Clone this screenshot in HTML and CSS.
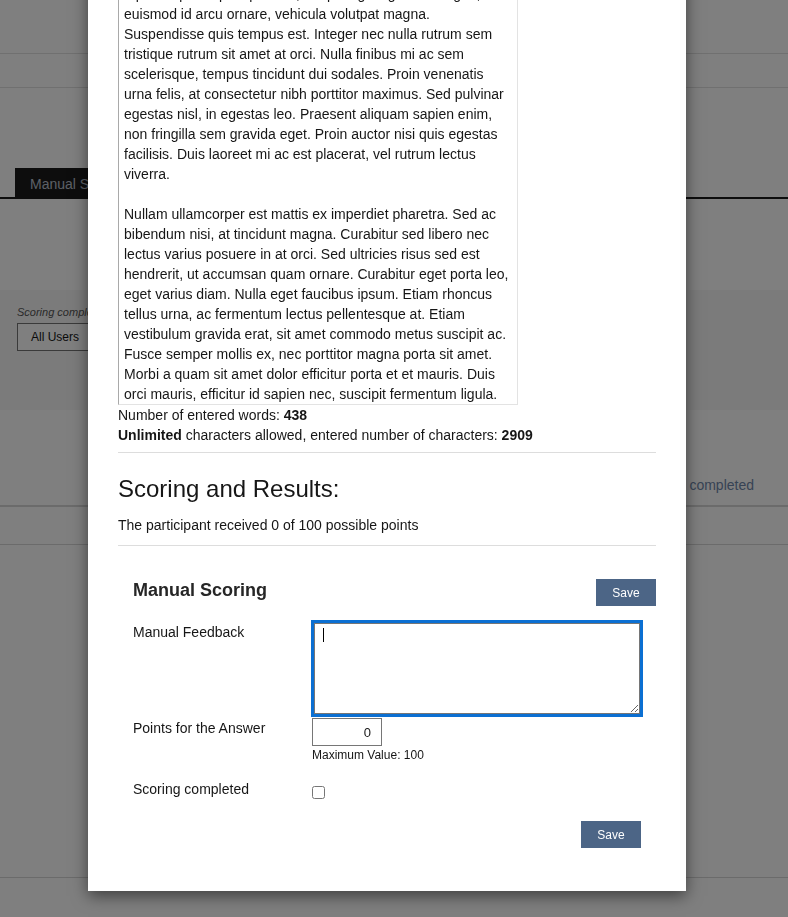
FILE: index.html
```html
<!DOCTYPE html>
<html lang="en">
<head>
<meta charset="utf-8">
<title>Manual Scoring</title>
<link rel="stylesheet" href="styles.css">
</head>
<body>
<div class="page">
  <div class="hdr"></div>
  <div class="subhdr"></div>
  <div class="tabs"><div class="tab">Manual Scoring</div></div>
  <div class="filter">
    <div class="filter-label">Scoring completed</div>
    <div class="filter-btn">All Users</div>
  </div>
  <div class="tbl-head"><span class="tbl-link">Scoring completed</span></div>
  <div class="tbl-row"></div>
  <div class="tbl-body"></div>
</div>

<div class="backdrop"></div>

<div class="modal">
  <div class="answer">
    <div class="ln">Vivamus lobortis felis vitae dictum tempus. Aenean dapibus</div>
    <div class="ln">sem in lorem pellentesque, in interdum nisl tincidunt. Cras</div>
    <div class="ln">a purus quis sapien pretium, tempor ligula gravida augue,</div>
    <div class="ln">euismod id arcu ornare, vehicula volutpat magna.</div>
    <div class="ln">Suspendisse quis tempus est. Integer nec nulla rutrum sem</div>
    <div class="ln">tristique rutrum sit amet at orci. Nulla finibus mi ac sem</div>
    <div class="ln">scelerisque, tempus tincidunt dui sodales. Proin venenatis</div>
    <div class="ln">urna felis, at consectetur nibh porttitor maximus. Sed pulvinar</div>
    <div class="ln">egestas nisl, in egestas leo. Praesent aliquam sapien enim,</div>
    <div class="ln">non fringilla sem gravida eget. Proin auctor nisi quis egestas</div>
    <div class="ln">facilisis. Duis laoreet mi ac est placerat, vel rutrum lectus</div>
    <div class="ln">viverra.</div>
    <div class="ln">&nbsp;</div>
    <div class="ln">Nullam ullamcorper est mattis ex imperdiet pharetra. Sed ac</div>
    <div class="ln">bibendum nisi, at tincidunt magna. Curabitur sed libero nec</div>
    <div class="ln">lectus varius posuere in at orci. Sed ultricies risus sed est</div>
    <div class="ln">hendrerit, ut accumsan quam ornare. Curabitur eget porta leo,</div>
    <div class="ln">eget varius diam. Nulla eget faucibus ipsum. Etiam rhoncus</div>
    <div class="ln">tellus urna, ac fermentum lectus pellentesque at. Etiam</div>
    <div class="ln">vestibulum gravida erat, sit amet commodo metus suscipit ac.</div>
    <div class="ln">Fusce semper mollis ex, nec porttitor magna porta sit amet.</div>
    <div class="ln">Morbi a quam sit amet dolor efficitur porta et et mauris. Duis</div>
    <div class="ln">orci mauris, efficitur id sapien nec, suscipit fermentum ligula.</div>
  </div>
  <div class="stat">Number of entered words: <b>438</b></div>
  <div class="stat"><b>Unlimited</b> characters allowed, entered number of characters: <b>2909</b></div>
  <hr class="sep sep-top">
  <h2 class="res-title">Scoring and Results:</h2>
  <p class="res-text">The participant received 0 of 100 possible points</p>
  <hr class="sep sep-bottom">

  <section class="scoring">
    <div class="scoring-head">
      <h3 class="scoring-title">Manual Scoring</h3>
      <button class="btn" type="button">Save</button>
    </div>
    <div class="form">
      <div class="row row-feedback">
        <label class="lbl" for="fb">Manual Feedback</label>
        <div class="ctl"><div class="fb-wrap"><textarea id="fb" class="feedback" autofocus></textarea></div></div>
      </div>
      <div class="row row-points">
        <label class="lbl" for="pts">Points for the Answer</label>
        <div class="ctl">
          <input id="pts" class="points" type="text" value="0">
          <div class="hint">Maximum Value: 100</div>
        </div>
      </div>
      <div class="row row-done">
        <label class="lbl" for="done">Scoring completed</label>
        <div class="ctl"><input id="done" class="check" type="checkbox"></div>
      </div>
    </div>
    <div class="actions"><button class="btn" type="button">Save</button></div>
  </section>
</div>
</body>
</html>
```

FILE: styles.css
```css
html, body {
  margin: 0;
  padding: 0;
}
body {
  font-family: "Liberation Sans", Arial, sans-serif;
  font-size: 14px;
  color: #161616;
  background: #fff;
  overflow: hidden;
  height: 917px;
}

/* background page */
.page {
  width: 788px;
}
.hdr {
  height: 53px;
  border-bottom: 1px solid #e0e0e0;
}
.subhdr {
  height: 33px;
  border-bottom: 1px solid #e0e0e0;
}
.tabs {
  padding-top: 80px;
  border-bottom: 2px solid #1a1a1a;
  display: flex;
}
.tab {
  margin-left: 15px;
  background: #1a1a1a;
  color: #b9c0cd;
  height: 29px;
  box-sizing: border-box;
  padding: 3px 15px 0;
  line-height: 26px;
  font-size: 14px;
}
.filter {
  margin-top: 91px;
  height: 120px;
  box-sizing: border-box;
  background: #f6f6f6;
  padding: 16px 0 0 17px;
}
.filter-label {
  font-style: italic;
  font-size: 11px;
  line-height: 12px;
  color: #555;
}
.filter-btn {
  margin-top: 5px;
  width: 120px;
  height: 28px;
  box-sizing: border-box;
  border: 1px solid #757575;
  background: #fff;
  font-size: 12px;
  line-height: 26px;
  padding-left: 13px;
  color: #161616;
}
.tbl-head {
  height: 97px;
  box-sizing: border-box;
  border-bottom: 2px solid #d6d6d6;
  display: flex;
  justify-content: flex-end;
  align-items: flex-end;
  padding: 0 34px 10px 0;
}
.tbl-link {
  color: #6f86aa;
  line-height: 20px;
  font-size: 14px;
}
.tbl-row {
  height: 37px;
  border-bottom: 1px solid #d6d6d6;
}
.tbl-body {
  height: 332px;
  border-bottom: 1px solid #d6d6d6;
}

/* overlay */
.backdrop {
  position: fixed;
  inset: 0;
  background: rgba(0, 0, 0, 0.5);
}

.modal {
  position: absolute;
  left: 88px;
  top: -91px;
  width: 598px;
  box-sizing: border-box;
  padding: 30px 30px 43px;
  background: #fff;
  box-shadow: 0 5px 15px rgba(0, 0, 0, 0.5);
}

.answer {
  width: 400px;
  box-sizing: border-box;
  border: 1px solid #e3e3e3;
  border-left-color: #a9a9a9;
  padding: 4px 5px 0 5px;
  overflow: hidden;
  color: #161616;
}
.ln {
  line-height: 20px;
  white-space: nowrap;
}

.stat {
  line-height: 20px;
}
.stat b {
  font-weight: bold;
}

.sep {
  border: 0;
  border-top: 1px solid #dddddd;
  height: 0;
}
.sep-top {
  margin: 7px 0 22px;
}
.res-title {
  margin: 0;
  font-size: 24px;
  font-weight: normal;
  line-height: 28px;
}
.res-text {
  margin: 12px 0 0;
  line-height: 20px;
}
.sep-bottom {
  margin: 10px 0 0;
}

.scoring {
  margin-top: 33px;
}
.scoring-head {
  display: flex;
  justify-content: space-between;
  align-items: flex-start;
  padding-left: 15px;
}
.scoring-title {
  margin: 0;
  font-size: 18px;
  font-weight: bold;
  line-height: 22px;
  color: #262626;
}
.btn {
  width: 60px;
  height: 27px;
  border: 0;
  padding: 0;
  background: #4c6586;
  color: #fff;
  font-family: "Liberation Sans", Arial, sans-serif;
  font-size: 12px;
}

.form {
  padding: 0 15px;
}
.row {
  display: grid;
  grid-template-columns: 179px 1fr;
  align-items: start;
}
.row-feedback {
  margin-top: 16px;
}
.row-points {
  margin-top: 4px;
}
.row-done {
  margin-top: 16px;
}
.lbl {
  line-height: 20px;
}
.ctl {
  display: flex;
  flex-direction: column;
  align-items: flex-start;
}
.fb-wrap {
  position: relative;
  margin: 1px 0 0 2px;
}
.fb-wrap::after {
  content: "";
  position: absolute;
  left: 9px;
  top: 5px;
  width: 1px;
  height: 14px;
  background: #000;
}
.feedback {
  display: block;
  margin: 0;
  width: 326px;
  height: 91px;
  box-sizing: border-box;
  border: 1px solid #767676;
  padding: 3px 7px;
  font-family: "Liberation Sans", Arial, sans-serif;
  font-size: 14px;
  line-height: 16px;
  outline: 3px solid #0b6fd2;
  outline-offset: 0;
  caret-color: transparent;
  resize: both;
}
.feedback:focus {
  outline: 3px solid #0b6fd2;
}
.points {
  width: 70px;
  height: 28px;
  box-sizing: border-box;
  border: 1px solid #767676;
  padding: 0 10px 0 4px;
  margin: 0;
  text-align: right;
  font-family: "Liberation Sans", Arial, sans-serif;
  font-size: 13px;
  color: #161616;
}
.hint {
  margin-top: 1px;
  font-size: 12px;
  line-height: 16px;
}
.check {
  margin: 7px 0 0;
  width: 13px;
  height: 13px;
}

.actions {
  display: flex;
  justify-content: flex-end;
  padding-right: 15px;
  margin-top: 22px;
}
```
